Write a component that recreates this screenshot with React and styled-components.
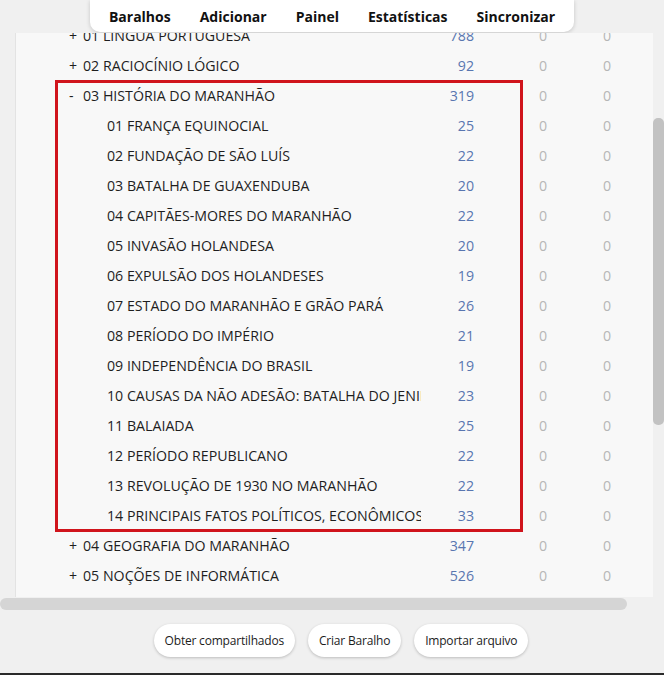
import React from 'react';
import styled, { createGlobalStyle } from 'styled-components';

const GlobalStyle = createGlobalStyle`
  html, body {
    margin: 0;
    padding: 0;
    background: #f0f0f0;
  }
  body {
    font-family: "Open Sans", "Noto Sans", "Liberation Sans", sans-serif;
    color: #222;
  }
  * { box-sizing: border-box; }
`;

const decks = [
  { sign: '+', name: '01 LÍNGUA PORTUGUESA', count: 788 },
  { sign: '+', name: '02 RACIOCÍNIO LÓGICO', count: 92 },
  {
    sign: '-',
    name: '03 HISTÓRIA DO MARANHÃO',
    count: 319,
    marked: true,
    children: [
      ['01 FRANÇA EQUINOCIAL', 25],
      ['02 FUNDAÇÃO DE SÃO LUÍS', 22],
      ['03 BATALHA DE GUAXENDUBA', 20],
      ['04 CAPITÃES-MORES DO MARANHÃO', 22],
      ['05 INVASÃO HOLANDESA', 20],
      ['06 EXPULSÃO DOS HOLANDESES', 19],
      ['07 ESTADO DO MARANHÃO E GRÃO PARÁ', 26],
      ['08 PERÍODO DO IMPÉRIO', 21],
      ['09 INDEPENDÊNCIA DO BRASIL', 19],
      ['10 CAUSAS DA NÃO ADESÃO: BATALHA DO JENIPAPO', 23],
      ['11 BALAIADA', 25],
      ['12 PERÍODO REPUBLICANO', 22],
      ['13 REVOLUÇÃO DE 1930 NO MARANHÃO', 22],
      ['14 PRINCIPAIS FATOS POLÍTICOS, ECONÔMICOS E SOCIAIS', 33],
    ],
  },
  { sign: '+', name: '04 GEOGRAFIA DO MARANHÃO', count: 347 },
  { sign: '+', name: '05 NOÇÕES DE INFORMÁTICA', count: 526 },
];

const Page = styled.div`
  height: 675px;
  display: flex;
  flex-direction: column;
  border-bottom: 2px solid #2a2a2a;
`;

const TopBar = styled.div`
  height: 33px;
  display: flex;
  justify-content: center;
  align-items: flex-start;
  flex-shrink: 0;
`;

const Nav = styled.nav`
  height: 32px;
  display: flex;
  align-items: center;
  gap: 29px;
  padding: 0 19px;
  background: #fff;
  border-radius: 0 0 10px 10px;
  box-shadow: 0 1px 4px rgba(0, 0, 0, 0.18);
`;

const NavItem = styled.span`
  font-size: 14px;
  font-weight: 700;
  color: #111;
`;

const Frame = styled.div`
  height: 577px;
  display: grid;
  grid-template-columns: 653px 11px;
  grid-template-rows: 565px 12px;
  flex-shrink: 0;
`;

const Viewport = styled.div`
  overflow: hidden;
  padding-left: 15px;
`;

const Panel = styled.div`
  margin-top: -13px;
  padding-bottom: 7px;
  background: #f8f8f8;
  border-left: 1px solid #e3e3e3;
`;

/* the red highlight round the expanded deck lies over its rows */
const Group = styled.div`
  position: relative;

  &::after {
    content: '';
    display: ${(p) => (p.$marked ? 'block' : 'none')};
    position: absolute;
    top: 0;
    bottom: -2px;
    left: 39px;
    width: 462px;
    border: 3px solid #d0141c;
    pointer-events: none;
  }
`;

const Row = styled.div`
  height: 30px;
  display: grid;
  grid-template-columns: 352px 53px 73px 64px;
  align-items: center;
  padding-left: 53px;
  font-size: 14.2px;
`;

const Name = styled.div`
  display: flex;
  white-space: nowrap;
  overflow: hidden;
  color: #1e1e1e;
  padding-left: ${(p) => (p.$child ? '38px' : '0')};
`;

const Sign = styled.span`
  width: 14px;
  flex-shrink: 0;
`;

const Count = styled.div`
  text-align: right;
  color: #5876b0;
`;

const Zero = styled.div`
  text-align: right;
  color: #b6b6b6;
`;

const VTrack = styled.div`
  grid-row: 1 / span 2;
  grid-column: 2;
  padding-top: 85px;
`;

const VThumb = styled.div`
  height: 307px;
  background: #c2c2c2;
  border-radius: 5px;
`;

const HTrack = styled.div`
  grid-row: 2;
  grid-column: 1;
`;

const HThumb = styled.div`
  width: 627px;
  height: 12px;
  background: #d5d5d5;
  border-radius: 6px;
`;

const Footer = styled.div`
  flex: 1;
  display: flex;
  justify-content: center;
  align-items: flex-start;
  gap: 13px;
  padding: 14px 0 0 18px;
`;

const Button = styled.button`
  height: 33px;
  padding: 0 11px;
  border: none;
  border-radius: 17px;
  background: #fff;
  box-shadow: 0 1px 3px rgba(0, 0, 0, 0.22);
  font-family: inherit;
  font-size: 12px;
  letter-spacing: -0.2px;
  color: #1c1c1c;
`;

const DeckRow = ({ sign, name, count, child }) => (
  <Row>
    <Name $child={child}>
      {!child && <Sign>{sign}</Sign>}
      <span>{name}</span>
    </Name>
    <Count>{count}</Count>
    <Zero>0</Zero>
    <Zero>0</Zero>
  </Row>
);

export default function App() {
  return (
    <>
      <GlobalStyle />
      <Page>
        <TopBar>
          <Nav>
            <NavItem>Baralhos</NavItem>
            <NavItem>Adicionar</NavItem>
            <NavItem>Painel</NavItem>
            <NavItem>Estatísticas</NavItem>
            <NavItem>Sincronizar</NavItem>
          </Nav>
        </TopBar>
        <Frame>
          <Viewport>
            <Panel>
              {decks.map((d) => (
                <Group key={d.name} $marked={d.marked}>
                  <DeckRow sign={d.sign} name={d.name} count={d.count} />
                  {d.children &&
                    d.children.map(([n, c]) => (
                      <DeckRow key={n} name={n} count={c} child />
                    ))}
                </Group>
              ))}
            </Panel>
          </Viewport>
          <VTrack>
            <VThumb />
          </VTrack>
          <HTrack>
            <HThumb />
          </HTrack>
        </Frame>
        <Footer>
          <Button>Obter compartilhados</Button>
          <Button>Criar Baralho</Button>
          <Button>Importar arquivo</Button>
        </Footer>
      </Page>
    </>
  );
}
